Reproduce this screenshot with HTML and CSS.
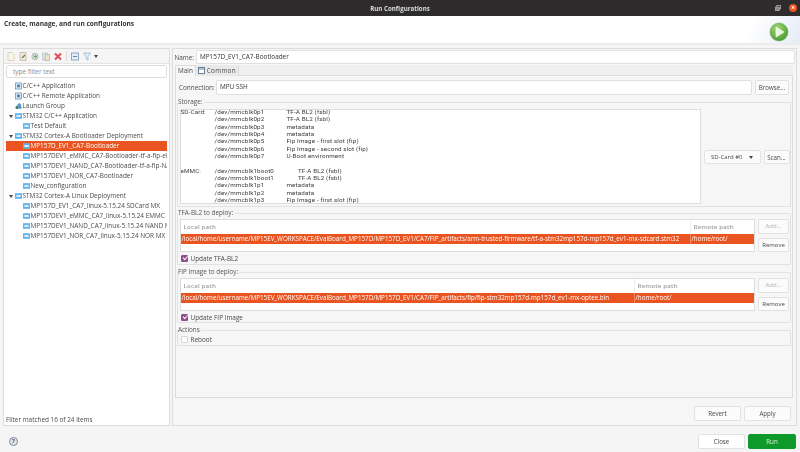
FILE: index.html
```html
<!DOCTYPE html>
<html lang="en">
<head>
    <meta charset="UTF-8">
    <meta name="viewport" content="width=device-width, initial-scale=1.0">
    <title>Run Configurations</title>
    <link rel="stylesheet" href="styles.css">
</head>
<body>
    <svg class="defs" width="0" height="0">
        <symbol id="ic-c" viewBox="0 0 8 8">
            <rect x="0.5" y="0.5" width="7" height="7" fill="#d5e6f5" stroke="#5f8fb5" stroke-width="0.8"/>
            <rect x="2.5" y="2.5" width="3" height="3" fill="#4a76a0"/>
        </symbol>
        <symbol id="ic-st" viewBox="0 0 8 8">
            <rect x="0" y="0.8" width="8" height="6.4" fill="#5fb4ec"/>
            <rect x="1.6" y="3" width="4.8" height="2" fill="#e6f5ff"/>
        </symbol>
        <symbol id="ic-group" viewBox="0 0 8 8">
            <circle cx="5" cy="3" r="2.2" fill="#5a9ad0"/>
            <circle cx="2.4" cy="5.6" r="1.9" fill="#3f7f66"/>
            <rect x="4" y="4.8" width="3.4" height="2.2" fill="#4d86b8"/>
        </symbol>
    </svg>

    <div class="window">
        <div class="titlebar">
            <span class="title">Run Configurations</span>
            <svg class="restore" width="6" height="6" viewBox="0 0 7 7">
                <rect x="2" y="0.5" width="4.5" height="4" fill="none" stroke="#a5a5a5"/>
                <rect x="0.5" y="2.5" width="4.5" height="4" fill="#8a8a8a" stroke="#a5a5a5"/>
            </svg>
            <span class="close-dot">×</span>
        </div>

        <div class="header">
            <strong>Create, manage, and run configurations</strong>
            <svg class="run-logo" width="20" height="20" viewBox="0 0 20 20">
                <defs>
                    <radialGradient id="runGrad" cx="0.4" cy="0.3" r="0.8">
                        <stop offset="0" stop-color="#a5d86e"/>
                        <stop offset="1" stop-color="#3f9430"/>
                    </radialGradient>
                </defs>
                <circle cx="10" cy="10" r="9" fill="url(#runGrad)" stroke="#6aa95a" stroke-width="0.6"/>
                <path d="M7 5 L15 10 L7 15 Z" fill="#e9f5dc" stroke="#fff" stroke-width="0.6"/>
            </svg>
        </div>

        <div class="main">
            <aside class="left">
                <div class="toolbar">
                    <svg width="8" height="9" viewBox="0 0 8 9"><path d="M1 .5h4l2 2v6H1z" fill="#fbf6e4" stroke="#c7bd9a" stroke-width=".7"/></svg>
                    <svg width="8" height="9" viewBox="0 0 8 9"><path d="M1 .5h6v8H1z" fill="#efe8cf" stroke="#a79f80" stroke-width=".7"/><path d="M3 6l3-3" stroke="#555" stroke-width="1.2"/></svg>
                    <svg width="8" height="9" viewBox="0 0 8 9"><circle cx="4" cy="4.5" r="3.2" fill="#c5d5c5" stroke="#8aa08a" stroke-width=".7"/><path d="M3 4.5h3M4.5 3v3" stroke="#3d9a4a"/></svg>
                    <svg width="8" height="9" viewBox="0 0 8 9"><path d="M.5 1h5v7h-5z" fill="#d6e0ea" stroke="#9fb0c0" stroke-width=".7"/><path d="M3 2.5h4.5v6H3z" fill="#e8dfc0" stroke="#a8a080" stroke-width=".7"/></svg>
                    <svg width="8" height="9" viewBox="0 0 8 9"><path d="M1 1.5l6 6M7 1.5l-6 6" stroke="#d8262c" stroke-width="2"/></svg>
                    <i class="tool-sep"></i>
                    <svg width="8" height="9" viewBox="0 0 8 9"><rect x=".5" y="1" width="7" height="7" fill="#e4edf5" stroke="#6f97bb"/><path d="M2 4.5h4" stroke="#44709a"/></svg>
                    <svg width="8" height="9" viewBox="0 0 8 9"><path d="M.5 1h7L5 4.5V8L3 7V4.5z" fill="#dfeaf3" stroke="#7ea1bf" stroke-width=".7"/></svg>
                    <span class="tool-arrow"></span>
                </div>
                <input class="filter" type="text" placeholder="type filter text">
                <ul class="tree">
                    <li class="lv1"><svg><use href="#ic-c"/></svg>C/C++ Application</li>
                    <li class="lv1"><svg><use href="#ic-c"/></svg>C/C++ Remote Application</li>
                    <li class="lv1"><svg><use href="#ic-group"/></svg>Launch Group</li>
                    <li class="lv1 open"><svg><use href="#ic-st"/></svg>STM32 C/C++ Application</li>
                    <li class="lv2"><svg><use href="#ic-st"/></svg>Test Default</li>
                    <li class="lv1 open"><svg><use href="#ic-st"/></svg>STM32 Cortex-A Bootloader Deployment</li>
                    <li class="lv2 selected"><svg><use href="#ic-st"/></svg>MP157D_EV1_CA7-Bootloader</li>
                    <li class="lv2"><svg><use href="#ic-st"/></svg>MP157DEV1_eMMC_CA7-Bootloader-tf-a-fip-eMMC</li>
                    <li class="lv2"><svg><use href="#ic-st"/></svg>MP157DEV1_NAND_CA7-Bootloader-tf-a-fip-NAND</li>
                    <li class="lv2"><svg><use href="#ic-st"/></svg>MP157DEV1_NOR_CA7-Bootloader</li>
                    <li class="lv2"><svg><use href="#ic-st"/></svg>New_configuration</li>
                    <li class="lv1 open"><svg><use href="#ic-st"/></svg>STM32 Cortex-A Linux Deployment</li>
                    <li class="lv2"><svg><use href="#ic-st"/></svg>MP157D_EV1_CA7_linux-5.15.24 SDCard MX</li>
                    <li class="lv2"><svg><use href="#ic-st"/></svg>MP157DEV1_eMMC_CA7_linux-5.15.24 EMMC MX</li>
                    <li class="lv2"><svg><use href="#ic-st"/></svg>MP157DEV1_NAND_CA7_linux-5.15.24 NAND MX</li>
                    <li class="lv2"><svg><use href="#ic-st"/></svg>MP157DEV1_NOR_CA7_linux-5.15.24 NOR MX</li>
                </ul>
                <div class="filter-count">Filter matched 16 of 24 items</div>
            </aside>

            <section class="right">
                <div class="name-row">
                    <label>Name:</label>
                    <div class="field">MP157D_EV1_CA7-Bootloader</div>
                </div>
                <div class="tabs">
                    <span class="tab active">Main</span>
                    <span class="tab">
                        <svg width="7" height="7" viewBox="0 0 7 7"><rect x=".5" y=".5" width="6" height="6" fill="#fff" stroke="#6a7f9a"/><path d="M.5 2h6" stroke="#6a7f9a"/></svg>
                        Common
                    </span>
                </div>
                <div class="tab-body">
                    <div class="conn-row">
                        <label>Connection:</label>
                        <div class="field">MPU SSH</div>
                        <button class="btn browse">Browse...</button>
                    </div>

                    <fieldset class="group storage">
                        <legend>Storage:</legend>
                        <div class="storage-inner">
                            <div class="storage-text">
                                <span>SD-Card:</span><span>/dev/mmcblk0p1</span><span>TF-A BL2 (fsbl)</span>
                                <span></span><span>/dev/mmcblk0p2</span><span>TF-A BL2 (fsbl)</span>
                                <span></span><span>/dev/mmcblk0p3</span><span>metadata</span>
                                <span></span><span>/dev/mmcblk0p4</span><span>metadata</span>
                                <span></span><span>/dev/mmcblk0p5</span><span>Fip Image - first slot (fip)</span>
                                <span></span><span>/dev/mmcblk0p6</span><span>Fip Image - second slot (fip)</span>
                                <span></span><span>/dev/mmcblk0p7</span><span>U-Boot environment</span>
                                <span></span><span></span><span></span>
                                <span>eMMC:</span><span>/dev/mmcblk1boot0</span><span class="boot">TF-A BL2 (fsbl)</span>
                                <span></span><span>/dev/mmcblk1boot1</span><span class="boot">TF-A BL2 (fsbl)</span>
                                <span></span><span>/dev/mmcblk1p1</span><span>metadata</span>
                                <span></span><span>/dev/mmcblk1p2</span><span>metadata</span>
                                <span></span><span>/dev/mmcblk1p3</span><span>Fip Image - first slot (fip)</span>
                            </div>
                            <div class="storage-side">
                                <button class="btn combo">SD-Card #0 <i class="tool-arrow"></i></button>
                                <button class="btn scan">Scan...</button>
                            </div>
                        </div>
                    </fieldset>

                    <fieldset class="group deploy">
                        <legend>TFA-BL2 to deploy:</legend>
                        <div class="deploy-row">
                            <div class="table tfa">
                                <div class="t-head"><span>Local path</span><span>Remote path</span></div>
                                <div class="t-row"><span>/local/home/username/MP15EV_WORKSPACE/EvalBoard_MP157D/MP157D_EV1/CA7/FIP_artifacts/arm-trusted-firmware/tf-a-stm32mp157d-mp157d_ev1-mx-sdcard.stm32</span><span>/home/root/</span></div>
                            </div>
                            <div class="side-btns">
                                <button class="btn disabled">Add...</button>
                                <button class="btn">Remove</button>
                            </div>
                        </div>
                        <div class="check"><i class="box on"></i>Update TFA-BL2</div>
                    </fieldset>

                    <fieldset class="group deploy fip-group">
                        <legend>FIP Image to deploy:</legend>
                        <div class="deploy-row">
                            <div class="table fip">
                                <div class="t-head"><span>Local path</span><span>Remote path</span></div>
                                <div class="t-row"><span>/local/home/username/MP15EV_WORKSPACE/EvalBoard_MP157D/MP157D_EV1/CA7/FIP_artifacts/fip/fip-stm32mp157d-mp157d_ev1-mx-optee.bin</span><span>/home/root/</span></div>
                            </div>
                            <div class="side-btns">
                                <button class="btn disabled">Add...</button>
                                <button class="btn">Remove</button>
                            </div>
                        </div>
                        <div class="check"><i class="box on"></i>Update FIP Image</div>
                    </fieldset>

                    <fieldset class="group actions">
                        <legend>Actions</legend>
                        <div class="check"><i class="box"></i>Reboot</div>
                    </fieldset>
                </div>
                <div class="apply-row">
                    <button class="btn wide">Revert</button>
                    <button class="btn wide">Apply</button>
                </div>
            </section>
        </div>

        <div class="footer">
            <span class="help">?</span>
            <button class="btn foot">Close</button>
            <button class="btn foot run">Run</button>
        </div>
    </div>
</body>
</html>
```

FILE: styles.css
```css
* {
    box-sizing: border-box;
}
html, body {
    margin: 0;
    height: 452px;
    overflow: hidden;
}
body {
    font-family: "Open Sans", "Noto Sans", sans-serif;
    font-size: 6.4px;
    color: #4a4a4a;
    background: #f5f5f5;
}
.defs {
    display: block;
    height: 0;
}
.window {
    width: 800px;
    height: 452px;
    display: flex;
    flex-direction: column;
    filter: blur(0.3px);
}
.titlebar {
    height: 16px;
    background: #2d2b2b;
    color: #dcdcdc;
    font-weight: 700;
    font-size: 6.2px;
    display: flex;
    align-items: center;
    justify-content: flex-end;
    position: relative;
    padding-right: 3px;
    gap: 8px;
}
.title {
    position: absolute;
    left: 0;
    right: 0;
    text-align: center;
}
.close-dot {
    width: 8px;
    height: 8px;
    border-radius: 50%;
    background: #e95420;
    color: #fff;
    font-size: 7px;
    line-height: 8px;
    text-align: center;
}
.header {
    height: 29px;
    background: linear-gradient(115deg, #fff 93%, #e6ebf6 100%);
    padding: 3px 4px 0;
    position: relative;
    color: #333;
    font-size: 6.55px;
    border-bottom: 2px solid #ececec;
}
.run-logo {
    position: absolute;
    right: 11px;
    top: 6px;
}
.main {
    height: 381px;
    display: flex;
    gap: 2px;
    padding: 3px 3px 0;
}
.left {
    width: 167px;
    flex: none;
    border: 1px solid #dcdcdc;
    background: #fff;
    display: flex;
    flex-direction: column;
}
.toolbar {
    height: 15px;
    background: #f5f5f5;
    border-bottom: 1px solid #e4e4e4;
    display: flex;
    align-items: center;
    gap: 3.8px;
    padding-left: 3px;
}
.toolbar svg {
    opacity: 0.8;
}
.tool-sep {
    width: 1px;
    height: 10px;
    background: #dadada;
}
.tool-arrow {
    display: inline-block;
    width: 0;
    height: 0;
    border: 2px solid transparent;
    border-top: 3px solid #444;
    border-bottom: 0;
}
.filter {
    display: block;
    height: 13px;
    margin: 1px 2px 3px 2px;
    border: 1px solid #ddd;
    border-radius: 2px;
    padding: 0 6px;
    font: inherit;
    background: #fff;
}
.filter::placeholder {
    color: #8c8c8c;
}
.tree {
    list-style: none;
    margin: 0;
    padding: 0 2px;
    flex: 1;
}
.tree li {
    height: 10px;
    line-height: 10px;
    white-space: nowrap;
    overflow: hidden;
    display: flex;
    align-items: center;
    position: relative;
}
.tree svg {
    width: 7px;
    height: 8px;
    margin-right: 1px;
    flex: none;
}
.lv1 {
    padding-left: 8.5px;
}
.lv2 {
    padding-left: 16.5px;
}
.open::before {
    content: "";
    position: absolute;
    left: 2.5px;
    top: 4px;
    border: 2px solid transparent;
    border-top: 3px solid #444;
    border-bottom: 0;
}
.tree .selected {
    background: #e95420;
    color: #fff;
}
.filter-count {
    height: 15px;
    padding: 5px 0 0 2px;
    line-height: 10px;
}
.right {
    width: 625px;
    flex: none;
    border: 1px solid #dcdcdc;
    background: #f6f6f6;
    padding: 1px 1px 0 1px;
    display: flex;
    flex-direction: column;
}
.name-row, .conn-row {
    display: flex;
    align-items: center;
    gap: 2px;
}
.name-row label {
    width: 20px;
    text-align: right;
}
.field {
    flex: 1;
    height: 14px;
    line-height: 12px;
    background: #fff;
    border: 1px solid #e0e0e0;
    border-radius: 2px;
    padding: 0 3px;
    color: #333;
}
.tabs {
    display: flex;
    margin: 1px 2px 0 1px;
    height: 11px;
    border-bottom: 1px solid #ddd;
    background: #efefef;
}
.tab {
    height: 11px;
    line-height: 10px;
    padding: 0 2px;
    display: flex;
    gap: 2px;
    align-items: center;
    background: #e9e9e9;
    border-right: 1px solid #dcdcdc;
    letter-spacing: 0.25px;
}
.tab.active {
    background: #f6f6f6;
    border: 1px solid #ddd;
    border-bottom: 0;
    letter-spacing: 0;
}
.tab-body {
    margin: 0 2px 8px 1px;
    height: 322px;
    border: 1px solid #dcdcdc;
    border-top: 0;
    padding: 4px 1px 0 1px;
}
.conn-row {
    height: 15px;
    margin-bottom: 3px;
    padding: 0 2px 0 2px;
}
.conn-row label {
    width: 35px;
}
.conn-row .field {
    height: 15px;
}
.btn {
    font: inherit;
    font-size: 6.2px;
    color: #4a4a4a;
    background: #fbfbfb;
    border: 1px solid #e2e2e2;
    border-radius: 2px;
    padding: 0;
    height: 15px;
}
.browse {
    width: 34px;
    margin-left: 1px;
}
.group {
    margin: 0 0 3px;
    padding: 0;
    border: 1px solid #e2e2e2;
    border-radius: 1px;
    min-width: 0;
}
.group legend {
    padding: 0 1px 0 0;
    margin-left: 0;
    line-height: 8px;
    color: #555;
}
.storage {
    height: 109px;
    margin-bottom: 2px;
}
.storage-inner {
    display: flex;
    padding: 3px 0 0 1.5px;
}
.storage-text {
    width: 521px;
    height: 95px;
    background: #fff;
    border: 1px solid #ddd;
    display: grid;
    grid-template-columns: 34px 72px 1fr;
    grid-auto-rows: 7.33px;
    overflow: hidden;
    color: #3c3c3c;
    font-family: Roboto, "Open Sans", sans-serif;
    font-size: 6.25px;
    letter-spacing: 0.14px;
    line-height: 7.33px;
    white-space: nowrap;
}
.storage-text span {
    margin-top: -1px;
    align-self: start;
}
.boot {
    padding-left: 11.5px;
}
.storage-side {
    flex: 1;
    display: flex;
    gap: 3px;
    padding: 41px 0 0 3px;
}
.combo {
    width: 57px;
    height: 14px;
    font-size: 6px;
}
.combo .tool-arrow {
    margin-left: 5px;
}
.scan {
    width: 26px;
    height: 14px;
}
.deploy {
    height: 56px;
}
.fip-group {
    height: 55px;
}
.deploy-row {
    display: flex;
    gap: 3px;
    padding: 2px 0 0 1.5px;
    height: 36px;
}
.table {
    width: 575.5px;
    height: 33px;
    background: #fff;
    border: 1px solid #ddd;
    font-size: 6.27px;
    overflow: hidden;
}
.t-head, .t-row {
    display: grid;
    white-space: nowrap;
}
.tfa .t-head, .tfa .t-row {
    grid-template-columns: 509px 1fr;
}
.fip .t-head, .fip .t-row {
    grid-template-columns: 453px 1fr;
}
.t-head {
    height: 14px;
    line-height: 14px;
    color: #9a9a9a;
    font-size: 6.1px;
    font-weight: 600;
    letter-spacing: 0.2px;
}
.t-head span {
    padding-left: 3px;
}
.t-head span:last-child {
    border-left: 1px solid #eee;
}
.t-row {
    height: 10px;
    line-height: 10px;
    background: #e95420;
    color: #fff;
}
.t-row span {
    overflow: hidden;
    padding-left: 1px;
}
.t-row span:last-child {
    border-left: 1px solid #f08a5f;
}
.side-btns {
    display: flex;
    flex-direction: column;
    gap: 4px;
}
.side-btns .btn {
    width: 31px;
    height: 14.5px;
    font-size: 6px;
}
.btn.disabled {
    color: #b5b5b5;
}
.check {
    display: flex;
    align-items: center;
    gap: 2.5px;
    height: 11px;
    padding-left: 3px;
}
.box {
    width: 7px;
    height: 7px;
    border-radius: 1px;
    border: 1px solid #d5d5d5;
    background: #fff;
}
.box.on {
    background: #924d8b;
    border-color: #924d8b;
    position: relative;
}
.box.on::after {
    content: "";
    position: absolute;
    left: 0.5px;
    top: 0;
    width: 3.5px;
    height: 2px;
    border-left: 1px solid #fff;
    border-bottom: 1px solid #fff;
    transform: rotate(-45deg);
}
.actions {
    height: 20px;
}
.actions .check {
    height: 10px;
}
.apply-row {
    display: flex;
    justify-content: flex-end;
    gap: 3px;
    padding-right: 4px;
}
.wide {
    width: 47px;
}
.footer {
    flex: 1;
    display: flex;
    align-items: flex-start;
    gap: 3px;
    padding: 8px 4px 0 9px;
}
.help {
    width: 9px;
    height: 9px;
    margin: 3px auto 0 0;
    border-radius: 50%;
    background: #dfe3ea;
    border: 1px solid #7d8a9a;
    font-size: 6px;
    font-weight: 700;
    line-height: 7px;
    text-align: center;
    color: #4d5a6a;
}
.foot {
    width: 47px;
    height: 15px;
    background: #fff;
}
.run {
    width: 48px;
    background: #0e9a2b;
    border-color: #0e9a2b;
    color: #d9f0dc;
}
```
